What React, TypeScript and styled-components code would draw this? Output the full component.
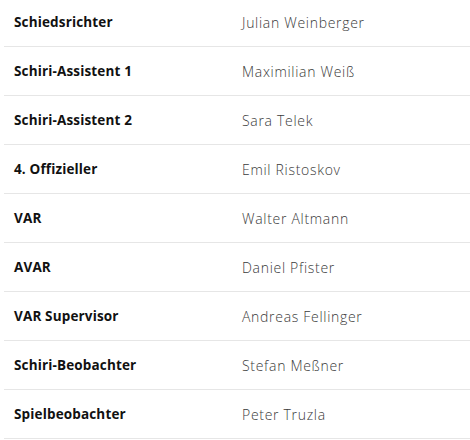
import React from "react";
import styled, { createGlobalStyle } from "styled-components";

const Global = createGlobalStyle`
  html, body { margin: 0; padding: 0; background: #ffffff; }
  body { overflow: hidden; }
`;

const Table = styled.div`
  margin: -2px 0 0 4px;
  display: flex;
  flex-direction: column;
`;

const Row = styled.div`
  display: grid;
  grid-template-columns: 228px 1fr;
  align-items: center;
  height: 48px;
  padding: 0 10px;
  border-bottom: 1px solid #e6e6e6;
`;

const Role = styled.span`
  font-family: "Open Sans", "Liberation Sans", sans-serif;
  font-weight: 700;
  font-size: 13.5px;
  letter-spacing: 0.15px;
  color: #111111;
`;

const Name = styled.span`
  font-family: "Open Sans", "Liberation Sans", sans-serif;
  font-weight: 300;
  font-size: 14px;
  letter-spacing: 0.7px;
  color: #3a3a3a;
`;

const data: [string, string][] = [
  ["Schiedsrichter", "Julian Weinberger"],
  ["Schiri-Assistent 1", "Maximilian Weiß"],
  ["Schiri-Assistent 2", "Sara Telek"],
  ["4. Offizieller", "Emil Ristoskov"],
  ["VAR", "Walter Altmann"],
  ["AVAR", "Daniel Pfister"],
  ["VAR Supervisor", "Andreas Fellinger"],
  ["Schiri-Beobachter", "Stefan Meßner"],
  ["Spielbeobachter", "Peter Truzla"],
];

export default function App() {
  return (
    <>
      <Global />
      <Table>
        {data.map(([role, name]) => (
          <Row key={role}>
            <Role>{role}</Role>
            <Name>{name}</Name>
          </Row>
        ))}
      </Table>
    </>
  );
}
